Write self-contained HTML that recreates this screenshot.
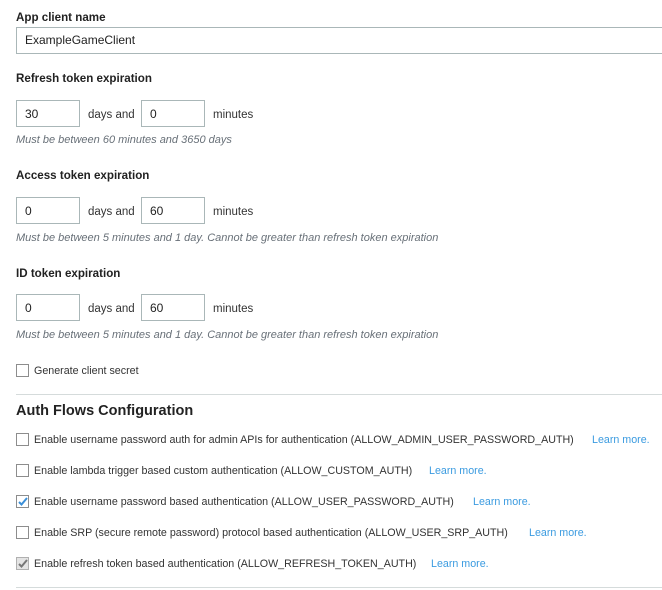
<!DOCTYPE html>
<html><head><style>
body{margin:0;width:662px;height:590px;background:#fff;font-family:"Liberation Sans",Arial,sans-serif;color:#222;position:relative;overflow:hidden}
.a{position:absolute;white-space:nowrap}
.lbl{font-weight:bold;font-size:11.6px;color:#222}
.inp{position:absolute;border:1px solid #aab7b8;box-sizing:border-box;height:27px;font-size:12px;line-height:27px;padding-left:8px;background:#fff}
.t{font-size:11.5px;color:#333}
.hint{font-size:11px;font-style:italic;color:#687078}
.cb{position:absolute;width:13px;height:13px;border:1px solid #8d8d8d;box-sizing:border-box;background:#fff}
.ct{font-size:10.7px;color:#333}
.lm{font-size:10.7px;color:#3b9be0}
.hr{position:absolute;left:16px;right:0;height:1px;background:#d5dbdb}
</style></head><body>
<div class="a lbl" style="left:16px;top:11px">App client name</div>
<div class="inp" style="left:16px;top:27px;width:646px;border-right:none;line-height:25px">ExampleGameClient</div>

<div class="a lbl" style="left:16px;top:72px">Refresh token expiration</div>
<div class="inp" style="left:16px;top:100px;width:64px">30</div>
<div class="a t" style="left:88px;top:109px">days and</div>
<div class="inp" style="left:141px;top:100px;width:64px">0</div>
<div class="a t" style="left:213px;top:109px">minutes</div>
<div class="a hint" style="left:16px;top:134px">Must be between 60 minutes and 3650 days</div>

<div class="a lbl" style="left:16px;top:169px">Access token expiration</div>
<div class="inp" style="left:16px;top:197px;width:64px">0</div>
<div class="a t" style="left:88px;top:206px">days and</div>
<div class="inp" style="left:141px;top:197px;width:64px">60</div>
<div class="a t" style="left:213px;top:206px">minutes</div>
<div class="a hint" style="left:16px;top:232px">Must be between 5 minutes and 1 day. Cannot be greater than refresh token expiration</div>

<div class="a lbl" style="left:16px;top:267px">ID token expiration</div>
<div class="inp" style="left:16px;top:294px;width:64px">0</div>
<div class="a t" style="left:88px;top:303px">days and</div>
<div class="inp" style="left:141px;top:294px;width:64px">60</div>
<div class="a t" style="left:213px;top:303px">minutes</div>
<div class="a hint" style="left:16px;top:329px">Must be between 5 minutes and 1 day. Cannot be greater than refresh token expiration</div>

<div class="cb" style="left:16px;top:364px"></div>
<div class="a ct" style="left:34px;top:365px">Generate client secret</div>

<div class="hr" style="top:394px"></div>
<div class="a" style="left:16px;top:403px;font-size:14.5px;font-weight:bold;color:#222">Auth Flows Configuration</div>

<div class="cb" style="left:16px;top:433px"></div>
<div class="a ct" style="left:34px;top:434px">Enable username password auth for admin APIs for authentication (ALLOW_ADMIN_USER_PASSWORD_AUTH)</div>
<div class="a lm" style="left:592px;top:434px">Learn more.</div>

<div class="cb" style="left:16px;top:464px"></div>
<div class="a ct" style="left:34px;top:465px">Enable lambda trigger based custom authentication (ALLOW_CUSTOM_AUTH)</div>
<div class="a lm" style="left:429px;top:465px">Learn more.</div>

<div class="cb" style="left:16px;top:495px"><svg width="11" height="11" style="position:absolute;left:0;top:0"><path d="M2 6 L4.5 8.5 L10 2" stroke="#3b8fd8" stroke-width="2" fill="none"/></svg></div>
<div class="a ct" style="left:34px;top:496px">Enable username password based authentication (ALLOW_USER_PASSWORD_AUTH)</div>
<div class="a lm" style="left:473px;top:496px">Learn more.</div>

<div class="cb" style="left:16px;top:526px"></div>
<div class="a ct" style="left:34px;top:527px">Enable SRP (secure remote password) protocol based authentication (ALLOW_USER_SRP_AUTH)</div>
<div class="a lm" style="left:529px;top:527px">Learn more.</div>

<div class="cb" style="left:16px;top:557px;background:#e4e4e4;border-color:#b0b0b0"><svg width="11" height="11" style="position:absolute;left:0;top:0"><path d="M2 6 L4.5 8.5 L10 2" stroke="#777" stroke-width="2" fill="none"/></svg></div>
<div class="a ct" style="left:34px;top:558px">Enable refresh token based authentication (ALLOW_REFRESH_TOKEN_AUTH)</div>
<div class="a lm" style="left:431px;top:558px">Learn more.</div>

<div class="hr" style="top:587px"></div>
</body></html>
